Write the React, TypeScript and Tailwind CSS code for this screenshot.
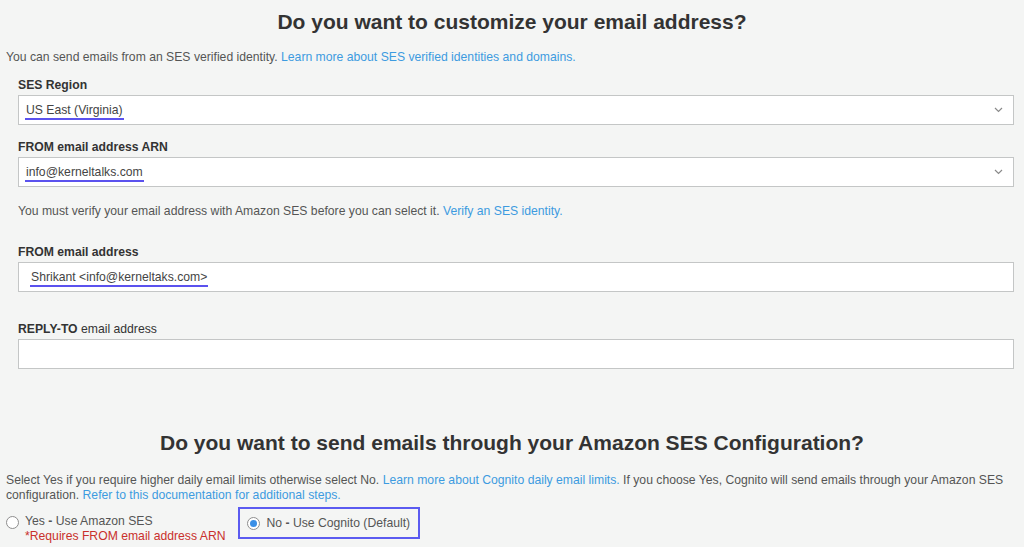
import React from "react";

const font = "font-['Liberation_Sans',Arial,sans-serif]";

// annotation underline used on the filled values
const Marked = ({ children }: { children: React.ReactNode }) => (
  <span className="inline-block border-b-2 border-[#5b52ee] px-[1px] leading-[15px]">
    {children}
  </span>
);

const Chevron = () => (
  <svg width="9" height="6" viewBox="0 0 9 6" className="shrink-0">
    <path d="M1 1l3.5 3.5L8 1" fill="none" stroke="#8a8a8a" strokeWidth="1.2" />
  </svg>
);

const Field = ({
  label,
  boldPart,
  value,
  select,
  indent,
}: {
  label?: string;
  boldPart: string;
  value?: string;
  select?: boolean;
  indent?: boolean;
}) => (
  <div className="flex flex-col">
    <label className="text-[12.2px] leading-[15px] text-[#333]">
      <span className="font-bold">{boldPart}</span>
      {label}
    </label>
    <div className="mt-[2px] flex h-[30px] items-center justify-between border border-[#c4c6c6] bg-white pr-[10px] text-[#444]">
      <div className={indent ? "pl-[11px]" : "pl-[6px]"}>
        {value && <Marked>{value}</Marked>}
      </div>
      {select && <Chevron />}
    </div>
  </div>
);

const Link = ({ children }: { children: React.ReactNode }) => (
  <a className="text-[#3d9be0]">{children}</a>
);

export default function App() {
  return (
    <div className={`${font} h-[547px] w-full overflow-hidden bg-[#f4f5f4] text-[12.2px] text-[#555]`}>
      <h1 className="pt-[10px] text-center text-[21px] font-bold leading-[24px] text-[#333]">
        Do you want to customize your email address?
      </h1>

      <p className="mt-[16px] pl-[6px] leading-[15px]">
        You can send emails from an SES verified identity.{" "}
        <Link>Learn more about SES verified identities and domains.</Link>
      </p>

      <div className="flex flex-col pl-[18px] pr-[10px]">
        <div className="mt-[13px]">
          <Field boldPart="SES Region" value="US East (Virginia)" select />
        </div>
        <div className="mt-[15px]">
          <Field boldPart="FROM email address ARN" value="info@kerneltalks.com" select />
        </div>
        <p className="mt-[17px] leading-[15px]">
          You must verify your email address with Amazon SES before you can select it.{" "}
          <Link>Verify an SES identity.</Link>
        </p>
        <div className="mt-[26px]">
          <Field boldPart="FROM email address" value="Shrikant <info@kerneltaks.com>" indent />
        </div>
        <div className="mt-[30px]">
          <Field boldPart="REPLY-TO" label=" email address" />
        </div>
      </div>

      <h2 className="mt-[62px] text-center text-[21px] font-bold leading-[24px] text-[#333]">
        Do you want to send emails through your Amazon SES Configuration?
      </h2>

      <p className="mt-[18px] whitespace-nowrap pl-[6px] leading-[15px]">
        Select Yes if you require higher daily email limits otherwise select No.{" "}
        <Link>Learn more about Cognito daily email limits.</Link> If you choose Yes, Cognito will
        send emails through your Amazon SES
        <br />
        configuration. <Link>Refer to this documentation for additional steps.</Link>
      </p>

      <div className="mt-[4px] flex items-start pl-[6px]">
        <div className="flex items-start pt-[7px]">
          <span className="mt-[2px] h-[13px] w-[13px] shrink-0 rounded-full border border-[#8e8e8e] bg-white" />
          <div className="ml-[6px] flex flex-col leading-[15px]">
            <span>
              Yes <b>-</b> Use Amazon SES
            </span>
            <span className="text-[#c9302c]">*Requires FROM email address ARN</span>
          </div>
        </div>
        <div className="ml-[13px] flex h-[32px] w-[182px] items-center border-2 border-[#5b5bf0] pl-[7px]">
          <span className="flex h-[13px] w-[13px] shrink-0 items-center justify-center rounded-full border border-[#8e8e8e] bg-white">
            <span className="h-[7px] w-[7px] rounded-full bg-[#3a8fe6]" />
          </span>
          <span className="ml-[6px] whitespace-nowrap leading-[15px]">
            No <b>-</b> Use Cognito (Default)
          </span>
        </div>
      </div>
    </div>
  );
}
